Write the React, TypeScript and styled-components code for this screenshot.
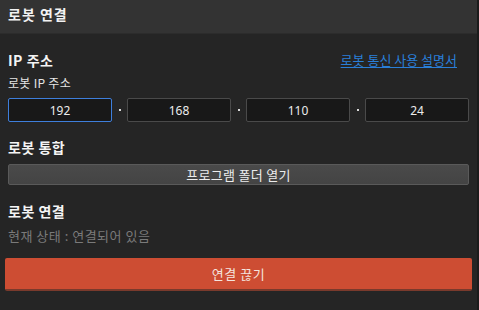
import React from "react";
import styled, { createGlobalStyle } from "styled-components";

const Global = createGlobalStyle`
  html, body { margin: 0; padding: 0; background: #252525; }
  body { font-family: "Noto Sans CJK KR", "Noto Sans", sans-serif; }
  * { box-sizing: border-box; }
`;

const Frame = styled.div`
  width: 479px;
  height: 310px;
  display: flex;
  background: #252525;
  overflow: hidden;
`;

const Panel = styled.div`
  flex: 1;
  display: flex;
  flex-direction: column;
`;

const Scroll = styled.div`
  width: 3px;
  background: #1b1b1b;
`;

const Header = styled.div`
  height: 34px;
  background: #333333;
  border-bottom: 1px solid #2c2c2c;
  padding: 5px 8px 0;
  color: #f2f2f2;
  font-size: 14px;
  font-weight: 700;
  line-height: 18px;
  letter-spacing: 1px;
`;

const Body = styled.div`
  padding: 0 8px;
  display: flex;
  flex-direction: column;
`;

const TitleRow = styled.div<{ $mt: number }>`
  display: flex;
  justify-content: space-between;
  align-items: center;
  margin-top: ${(p) => p.$mt}px;
`;

const SectionTitle = styled.div<{ $mt?: number }>`
  color: #f4f4f4;
  font-size: 14px;
  font-weight: 700;
  line-height: 18px;
  letter-spacing: 0.5px;
  margin-top: ${(p) => p.$mt ?? 0}px;
`;

const Link = styled.a`
  color: #2a7fd8;
  font-size: 13px;
  line-height: 16px;
  text-decoration: underline;
  text-underline-offset: 2px;
  margin-right: 12px;
  cursor: pointer;
`;

const Label = styled.div`
  color: #e6e6e6;
  font-size: 12px;
  line-height: 16px;
  letter-spacing: 0.3px;
  margin-top: 6px;
`;

const IpRow = styled.div`
  display: flex;
  align-items: center;
  margin-top: 7px;
`;

const IpInput = styled.div<{ $focused?: boolean }>`
  width: 104px;
  height: 24px;
  background: #181818;
  border: 1px solid ${(p) => (p.$focused ? "#3e7fdc" : "#4a4a4a")};
  border-radius: 2px;
  display: flex;
  align-items: center;
  justify-content: center;
  color: #ececec;
  font-family: "Noto Sans", sans-serif;
  font-size: 12px;
`;

const Dot = styled.div`
  width: 15px;
  display: flex;
  justify-content: center;
  &::before {
    content: "";
    width: 2px;
    height: 2px;
    background: #d8d8d8;
  }
`;

const GreyButton = styled.div`
  margin-top: 8px;
  height: 21px;
  background: linear-gradient(#4a4a4a, #444444);
  border: 1px solid #5a5a5a;
  border-radius: 2px;
  display: flex;
  align-items: center;
  justify-content: center;
  color: #ececec;
  font-size: 13px;
  letter-spacing: 0.3px;
`;

const Status = styled.div`
  color: #7a7a7a;
  font-size: 13px;
  line-height: 16px;
  letter-spacing: 0.5px;
  margin-top: 8px;
`;

const DangerButton = styled.div`
  margin: 14px -3px 0;
  height: 33px;
  background: #cd4d33;
  border-bottom: 2px solid #7a3a2c;
  border-radius: 2px;
  display: flex;
  align-items: center;
  justify-content: center;
  color: #f4e4df;
  font-size: 13px;
  letter-spacing: 0.5px;
`;

export default function App() {
  const parts = ["192", "168", "110", "24"];
  return (
    <>
      <Global />
      <Frame>
        <Panel>
          <Header>로봇 연결</Header>
          <Body>
            <TitleRow $mt={17}>
              <SectionTitle>IP 주소</SectionTitle>
              <Link>로봇 통신 사용 설명서</Link>
            </TitleRow>
            <Label>로봇 IP 주소</Label>
            <IpRow>
              {parts.map((p, i) => (
                <React.Fragment key={i}>
                  {i > 0 && <Dot />}
                  <IpInput $focused={i === 0}>{p}</IpInput>
                </React.Fragment>
              ))}
            </IpRow>
            <SectionTitle $mt={16}>로봇 통합</SectionTitle>
            <GreyButton>프로그램 폴더 열기</GreyButton>
            <SectionTitle $mt={17}>로봇 연결</SectionTitle>
            <Status>현재 상태 : 연결되어 있음</Status>
            <DangerButton>연결 끊기</DangerButton>
          </Body>
        </Panel>
        <Scroll />
      </Frame>
    </>
  );
}
